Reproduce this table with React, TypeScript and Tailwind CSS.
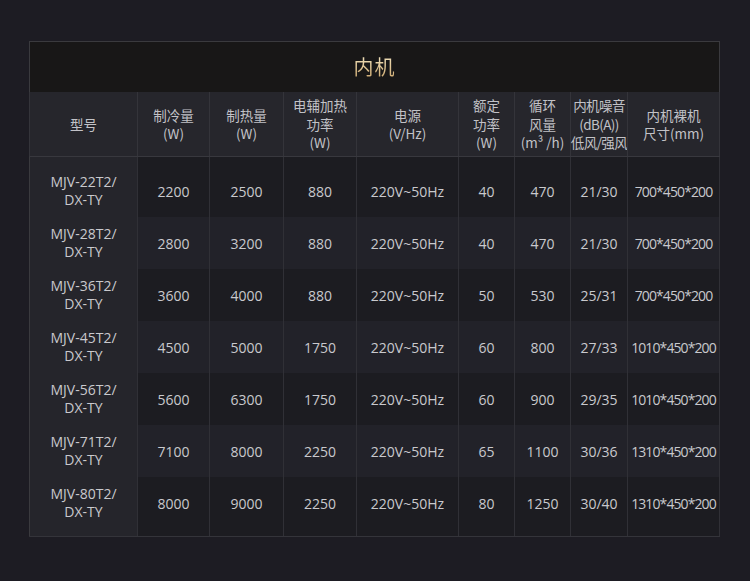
import React from "react";

const cols = "grid-cols-[108px_72px_74px_73px_102px_56px_56px_57px_93px]";

const headers: string[][] = [
  ["型号"],
  ["制冷量", "(W)"],
  ["制热量", "(W)"],
  ["电辅加热", "功率", "(W)"],
  ["电源", "(V/Hz)"],
  ["额定", "功率", "(W)"],
  ["循环", "风量", "(m³ /h)"],
  ["内机噪音", "(dB(A))", "低风/强风"],
  ["内机裸机", "尺寸(mm)"],
];

const rows = [
  ["MJV-22T2/", "2200", "2500", "880", "220V~50Hz", "40", "470", "21/30", "700*450*200"],
  ["MJV-28T2/", "2800", "3200", "880", "220V~50Hz", "40", "470", "21/30", "700*450*200"],
  ["MJV-36T2/", "3600", "4000", "880", "220V~50Hz", "50", "530", "25/31", "700*450*200"],
  ["MJV-45T2/", "4500", "5000", "1750", "220V~50Hz", "60", "800", "27/33", "1010*450*200"],
  ["MJV-56T2/", "5600", "6300", "1750", "220V~50Hz", "60", "900", "29/35", "1010*450*200"],
  ["MJV-71T2/", "7100", "8000", "2250", "220V~50Hz", "65", "1100", "30/36", "1310*450*200"],
  ["MJV-80T2/", "8000", "9000", "2250", "220V~50Hz", "80", "1250", "30/40", "1310*450*200"],
];

export default function App() {
  return (
    <div className="w-[750px] h-[581px] bg-[#1d1c23] pt-[41px] pl-[29px] font-['Open_Sans','Noto_Sans_CJK_SC',sans-serif]">
      <div className="w-[691px]">
        {/* title */}
        <div className="h-[51px] bg-[#181717] border-t border-x border-[#3a3a3e] flex items-center justify-center">
          <span className="text-[20px] font-['Noto_Sans_CJK_SC',sans-serif] bg-gradient-to-b from-[#f8ecca] to-[#c6a062] bg-clip-text text-transparent tracking-[1px]">
            内机
          </span>
        </div>

        {/* header */}
        <div className={`grid ${cols} h-[65px] bg-[#26262c] border-b border-[#38383e]`}>
          {headers.map((lines, i) => (
            <div
              key={i}
              className={`flex flex-col items-center justify-center text-[13.5px] leading-[18.5px] text-[#c2c2c7] font-['Noto_Sans_CJK_SC',sans-serif] whitespace-nowrap border-l border-[#34343a] ${
                i === 8 ? "border-r" : ""
              } ${i === 7 ? "tracking-[-0.6px]" : ""}`}
            >
              {lines.map((l) => (
                <span key={l}>{l}</span>
              ))}
            </div>
          ))}
        </div>

        {/* body */}
        {rows.map((r, ri) => {
          const first = ri === 0;
          const last = ri === rows.length - 1;
          const h = first ? "h-[60px] pt-[8px]" : last ? "h-[59px] pb-[7px]" : "h-[52px]";
          const band = ri % 2 === 1 ? "bg-[#222229]" : "bg-[#1c1c21]";
          return (
            <div key={ri} className={`grid ${cols} ${band} ${last ? "border-b border-[#34343a]" : ""}`}>
              {r.map((c, ci) => (
                <div
                  key={ci}
                  className={`${h} flex flex-col items-center justify-center text-[14px] text-[#c9c9cd] whitespace-nowrap border-l ${
                    ci === 0 ? "bg-[#25252b] leading-[18px] border-[#3a3a3e]" : "border-[#303036]"
                  } ${ci === 8 ? "border-r tracking-[-0.9px] text-[13px]" : ""}`}
                >
                  {ci === 0 ? (
                    <>
                      <span>{c}</span>
                      <span>DX-TY</span>
                    </>
                  ) : (
                    <span>{c}</span>
                  )}
                </div>
              ))}
            </div>
          );
        })}
      </div>
    </div>
  );
}
